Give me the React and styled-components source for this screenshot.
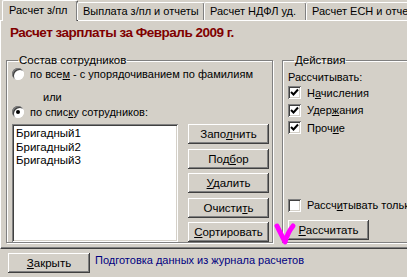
import styled, { createGlobalStyle } from "styled-components"

const Global = createGlobalStyle`
    body {
        margin: 0;
        background: #d4d0c8;
        font-family: "Liberation Sans", Arial, sans-serif;
        font-size: 11px;
        color: #000;
    }
`

const raised = `
    box-shadow: inset -1px -1px #404040, inset 1px 1px #fff, inset -2px -2px #808080, inset 2px 2px #d4d0c8;
`

const sunken = `
    box-shadow: inset 1px 1px #808080, inset -1px -1px #fff, inset 2px 2px #404040, inset -2px -2px #d4d0c8;
`

const Window = styled.div`
    position: relative;
    width: 407px;
    height: 277px;
    overflow: hidden;
    background: #d4d0c8;
`

const TabStrip = styled.div`
    display: flex;
    align-items: flex-end;
    height: 20px;
    padding-left: 2px;
    position: relative;
    z-index: 1;
`

const Tab = styled.div`
    flex: none;
    width: ${p => p.$w}px;
    height: ${p => (p.$active ? 21 : 18)}px;
    margin-bottom: ${p => (p.$active ? -1 : 0)}px;
    margin-left: ${p => (p.$active ? 0 : -1)}px;
    padding: ${p => (p.$active ? "3px 0 0 6px" : "2px 0 0 5px")};
    box-sizing: border-box;
    background: #d4d0c8;
    border-top: 1px solid #fff;
    border-left: 1px solid #fff;
    border-right: 1px solid #404040;
    box-shadow: inset -1px 0 #808080;
    border-radius: 2px 2px 0 0;
    white-space: nowrap;
    overflow: hidden;
    font-size: 11px;
`

const Page = styled.div`
    height: 229px;
    width: 420px;
    box-sizing: border-box;
    border-top: 1px solid #fff;
    border-left: 1px solid #fff;
    border-bottom: 1px solid #404040;
    box-shadow: inset 0 -1px #808080;
    padding: 2px 0 0 5px;
`

const Title = styled.h1`
    margin: 0 0 0 4px;
    height: 31px;
    font-size: 13.5px;
    line-height: 20px;
    font-weight: bold;
    color: #800000;
    letter-spacing: -0.5px;
`

const Groups = styled.div`
    display: flex;
    gap: 9px;
`

const Group = styled.fieldset`
    flex: none;
    width: ${p => p.$w}px;
    height: 189px;
    box-sizing: border-box;
    margin: 0;
    padding: 0 0 0 ${p => p.$pad}px;
    border: 1px solid #808080;
    box-shadow: inset 1px 1px #fff, 1px 1px #fff;
    display: flex;
    flex-direction: column;
`

const Legend = styled.legend`
    padding: 0 1px;
    margin-left: 6px;
    font-size: 11.5px;
    line-height: 12px;
`

const OptionRow = styled.label`
    display: flex;
    align-items: center;
    gap: 6px;
    height: ${p => p.$h || 18}px;
    font-size: 11px;
    white-space: nowrap;
`

const Indent = styled.div`
    height: 16px;
    margin-top: 7px;
    padding-left: 31px;
    font-size: 11px;
    line-height: 16px;
`

const Radio = styled.span`
    flex: none;
    width: 12px;
    height: 12px;
    border-radius: 50%;
    background: #fff;
    box-shadow: inset 1px 1px #808080, inset -1px -1px #fff, inset 2px 2px #404040;
    display: flex;
    align-items: center;
    justify-content: center;
    &::after {
        content: "";
        width: 4px;
        height: 4px;
        border-radius: 50%;
        background: ${p => (p.$on ? "#000" : "transparent")};
    }
`

const Box = styled.span`
    flex: none;
    width: 13px;
    height: 13px;
    background: #fff;
    ${sunken}
    display: flex;
    align-items: center;
    justify-content: center;
`

const Listing = styled.div`
    display: flex;
    gap: 10px;
    margin-top: 5px;
`

const ListBox = styled.div`
    width: 166px;
    height: 118px;
    box-sizing: border-box;
    padding: 3px 4px;
    background: #fff;
    ${sunken}
    font-size: 11.5px;
    line-height: 13.5px;
`

const ButtonColumn = styled.div`
    display: flex;
    flex-direction: column;
    gap: 4.5px;
`

const Button = styled.button`
    flex: none;
    width: ${p => p.$w || 81}px;
    height: 20px;
    margin: ${p => p.$m || 0};
    padding: 0;
    border: 0;
    background: #d4d0c8;
    ${raised}
    font-family: "Liberation Sans", Arial, sans-serif;
    font-size: 11.5px;
    color: #000;
`

const Caption = styled.div`
    font-size: 11px;
    height: 13px;
    margin-top: 5px;
`

const Spacer = styled.div`
    flex: 1;
`

const Footer = styled.div`
    display: flex;
    align-items: flex-start;
    gap: 5px;
    padding: 4px 0 0 8px;
`

const LinkText = styled.span`
    color: #000080;
    font-size: 11px;
    line-height: 14px;
`

const Mark = styled.svg`
    position: absolute;
    left: 272px;
    top: 220px;
`

const Check = () => (
    <svg width="9" height="9" viewBox="0 0 9 9">
        <path d="M1 4 L3.5 6.5 L8 1.5" stroke="#000" strokeWidth="2" fill="none" />
    </svg>
)

export default function App() {
    return (
        <Window>
            <Global />
            <TabStrip>
                <Tab $active $w={76}>Расчет з/пл</Tab>
                <Tab $w={128}>Выплата з/пл и отчеты</Tab>
                <Tab $w={103}>Расчет НДФЛ уд.</Tab>
                <Tab $w={130}>Расчет ЕСН и отчеты</Tab>
            </TabStrip>
            <Page>
                <Title>Расчет зарплаты за Февраль 2009 г.</Title>
                <Groups>
                    <Group $w={267} $pad={5}>
                        <Legend>Состав сотрудников</Legend>
                        <OptionRow $h={16}>
                            <Radio />
                            <span>по все<u>м</u> - с упорядочиванием по фамилиям</span>
                        </OptionRow>
                        <Indent>или</Indent>
                        <OptionRow $h={14}>
                            <Radio $on />
                            <span>по спис<u>к</u>у сотрудников:</span>
                        </OptionRow>
                        <Listing>
                            <ListBox>
                                <div>Бригадный1</div>
                                <div>Бригадный2</div>
                                <div>Бригадный3</div>
                            </ListBox>
                            <ButtonColumn>
                                <Button>Запо<u>л</u>нить</Button>
                                <Button>Под<u>б</u>ор</Button>
                                <Button><u>У</u>далить</Button>
                                <Button>Очисти<u>т</u>ь</Button>
                                <Button><u>С</u>ортировать</Button>
                            </ButtonColumn>
                        </Listing>
                    </Group>
                    <Group $w={140} $pad={5}>
                        <Legend>Действия</Legend>
                        <Caption>Рассчитывать:</Caption>
                        <OptionRow $h={17.5}>
                            <Box><Check /></Box>
                            <span>Н<u>а</u>числения</span>
                        </OptionRow>
                        <OptionRow $h={17.5}>
                            <Box><Check /></Box>
                            <span>Удер<u>ж</u>ания</span>
                        </OptionRow>
                        <OptionRow $h={17.5}>
                            <Box><Check /></Box>
                            <span>Проч<u>и</u>е</span>
                        </OptionRow>
                        <Spacer />
                        <OptionRow $h={18}>
                            <Box />
                            <span>Рассч<u>и</u>тывать только</span>
                        </OptionRow>
                        <Button $w={81} $m="6px 0 2px 0"><u>Р</u>ассчитать</Button>
                    </Group>
                </Groups>
            </Page>
            <Footer>
                <Button $w={82}><u>З</u>акрыть</Button>
                <LinkText>Подготовка данных из журнала расчетов</LinkText>
            </Footer>
            <Mark width="26" height="28" viewBox="0 0 26 28">
                <path d="M5 6 Q9 14 13 22 Q16 12 21 6" stroke="#ff00ff" strokeWidth="5" fill="none" strokeLinecap="round" strokeLinejoin="round" />
            </Mark>
        </Window>
    )
}
